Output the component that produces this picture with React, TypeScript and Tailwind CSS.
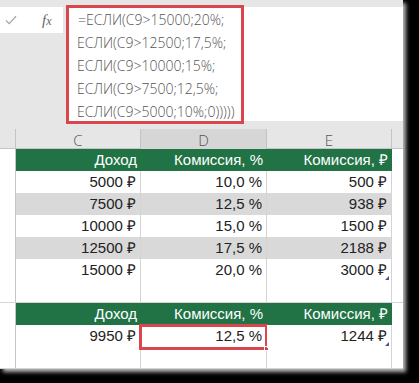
import React from "react";

const rows = [
  ["5000 ₽", "10,0 %", "500 ₽"],
  ["7500 ₽", "12,5 %", "938 ₽"],
  ["10000 ₽", "15,0 %", "1500 ₽"],
  ["12500 ₽", "17,5 %", "2188 ₽"],
  ["15000 ₽", "20,0 %", "3000 ₽"],
];

const formula = [
  "=ЕСЛИ(C9>15000;20%;",
  "ЕСЛИ(C9>12500;17,5%;",
  "ЕСЛИ(C9>10000;15%;",
  "ЕСЛИ(C9>7500;12,5%;",
  "ЕСЛИ(C9>5000;10%;0)))))",
];

const grid = "grid grid-cols-[16px_125px_126px_125px_11px]";

function Corner() {
  return (
    <span className="absolute right-[2px] bottom-[2px] w-0 h-0 border-l-[4px] border-l-transparent border-b-[4px] border-b-[#4a4f9a]" />
  );
}

function GreenRow() {
  return (
    <div className={`${grid} h-[22px] border-b border-[#d4d4d4]`}>
      <div className="bg-white border-r border-[#c4c4c4]" />
      <div className="col-span-3 bg-[#217346] grid grid-cols-[125px_126px_125px] text-white text-[15px]">
        <div className="flex items-center justify-end pr-[4px]">Доход</div>
        <div className="flex items-center justify-end pr-[4px]">Комиссия, %</div>
        <div className="flex items-center justify-end pr-[4px]">Комиссия, ₽</div>
      </div>
      <div className="bg-white" />
    </div>
  );
}

function DataRow({
  cells,
  gray,
  mark,
  selected,
}: {
  cells: string[];
  gray?: boolean;
  mark?: boolean;
  selected?: boolean;
}) {
  const bg = gray ? "bg-[#d9d9d9]" : "bg-white";
  return (
    <div className={`${grid} h-[22px] border-b border-[#d4d4d4] relative ${selected ? "z-10" : ""}`}>
      <div className="bg-white border-r border-[#c4c4c4]" />
      <div className={`${bg} border-r border-[#d4d4d4] flex items-center justify-end pr-[4px]`}>
        {cells[0]}
      </div>
      <div className={`${bg} border-r border-[#d4d4d4] flex items-center justify-end pr-[4px] relative`}>
        {cells[1]}
        {selected && (
          <>
            <span className="absolute -left-[2px] -top-[1px] -right-[2px] -bottom-[2px] border-[3px] border-[#d9474d]" />
            <span className="absolute -right-[3px] -bottom-[3px] w-[5px] h-[5px] bg-[#c44] border border-white" />
          </>
        )}
      </div>
      <div className={`${bg} border-r border-[#d4d4d4] flex items-center justify-end pr-[4px] relative`}>
        {cells[2]}
        {mark && <Corner />}
      </div>
      <div className="bg-white" />
    </div>
  );
}

export default function App() {
  return (
    <div className="w-[419px] h-[383px] bg-black overflow-hidden">
      <div className="w-[403px] h-[369px] bg-[#e6e6e6] shadow-[3px_3px_4px_rgba(185,185,185,1)] flex flex-col">
        <div className="h-[11px]" />
        <div className="flex items-start h-[114px] gap-[3px] font-['Open_Sans',sans-serif]">
          <div className="w-[63px] h-[26px] bg-white flex items-center">
            <svg width="12" height="10" viewBox="0 0 12 10" className="ml-[5px]">
              <path d="M1 5.5 L4.2 8.6 L11 1.2" fill="none" stroke="#a8a8a8" strokeWidth="1.3" />
            </svg>
            <span className="ml-[25px] font-['Liberation_Serif',serif] italic text-[15px] text-[#666] leading-none">
              f<span className="text-[12px]">x</span>
            </span>
          </div>
          <div className="flex-1 h-[114px] bg-white">
            <div className="w-[178px] h-[119px] -mt-[2px] border-[3px] border-[#d9474d] bg-white pl-[8px] text-[14px] leading-[23px] text-[#555] font-light">
              {formula.map((l, i) => (
                <div key={i} className={i === 0 ? "pl-[1px]" : ""}>
                  {l}
                </div>
              ))}
            </div>
          </div>
        </div>
        <div className="h-[12px]" />
        <div className={`${grid} h-[20px] border-b border-[#c4c4c4] text-[15px] text-[#555] font-['Open_Sans',sans-serif] font-light`}>
          <div className="border-r border-[#c4c4c4]" />
          <div className="flex items-center justify-center border-r border-[#c4c4c4]">C</div>
          <div className="flex items-center justify-center border-r border-[#c4c4c4] bg-[#d6d6d6]">D</div>
          <div className="flex items-center justify-center border-r border-[#c4c4c4]">E</div>
          <div />
        </div>
        <div className="font-['Liberation_Sans',Arial,sans-serif] text-[15px] text-[#222] bg-white flex-1">
          <GreenRow />
          {rows.map((r, i) => (
            <DataRow key={i} cells={r} gray={i % 2 === 1} mark={i === 4} />
          ))}
          <DataRow cells={["", "", ""]} />
          <GreenRow />
          <DataRow cells={["9950 ₽", "12,5 %", "1244 ₽"]} selected mark />
          <DataRow cells={["", "", ""]} />
        </div>
      </div>
    </div>
  );
}
